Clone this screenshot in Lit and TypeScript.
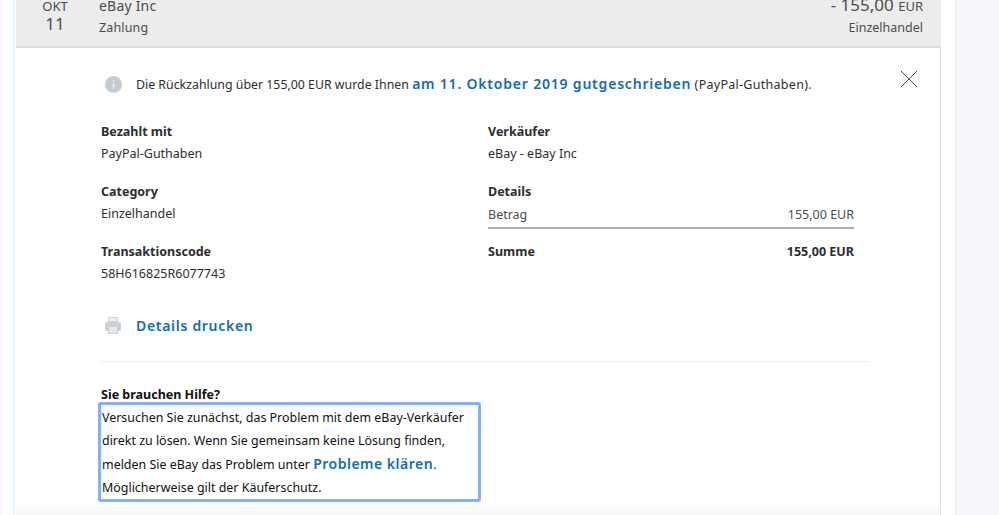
import { LitElement, html, css } from "lit";
import { customElement } from "lit/decorators.js";

@customElement("app-root")
export class AppRoot extends LitElement {
  static styles = css`
    :host {
      display: block;
      width: 999px;
      height: 515px;
      overflow: hidden;
      background: #f5f7fa;
      font-family: "Noto Sans", "Open Sans", sans-serif;
      font-size: 12.5px;
      color: #2c2e2f;
    }
    .page {
      width: 954px;
      height: 515px;
      box-sizing: border-box;
      margin-left: 2px;
      padding: 0 14px 0 10px;
      background: #fff;
      border-right: 1px solid #e9ebee;
      overflow: hidden;
    }
    .inner {
      background: #eff8fd;
      padding-left: 4px;
      height: 515px;
    }
    .head {
      height: 46px;
      background: #ececec;
      border-bottom: 2px solid #d9dfe3;
      display: flex;
      color: #4a4c4e;
    }
    .date {
      width: 78px;
      text-align: center;
      margin-top: -2px;
      line-height: 16px;
      font-size: 13px;
    }
    .date b {
      display: block;
      font-weight: 400;
      font-size: 17px;
      line-height: 18px;
      margin-top: 1px;
    }
    .who {
      margin-left: 5px;
      flex: 1;
    }
    .who .n {
      font-size: 14px;
      line-height: 16px;
      letter-spacing: 0.2px;
      margin-top: -2px;
    }
    .who .s {
      font-size: 12.5px;
      line-height: 16px;
      margin-top: 6px;
      letter-spacing: 0.15px;
    }
    .amt {
      text-align: right;
      padding-right: 18px;
    }
    .amt .v {
      font-size: 17px;
      line-height: 16px;
      margin-top: -3px;
    }
    .amt .v small {
      font-size: 13px;
    }
    .amt .s {
      font-size: 12.5px;
      line-height: 16px;
      margin-top: 6px;
    }
    .card {
      background: #fff;
      border-right: 1px solid #d9dfe3;
      height: 467px;
      box-sizing: border-box;
      padding: 26px 72px 0 85px;
      position: relative;
    }
    .notice {
      display: flex;
      align-items: center;
      gap: 14px;
      margin-left: 4px;
      height: 18px;
      white-space: nowrap;
    }
    .notice svg {
      flex: none;
      margin-top: 3px;
    }
    .notice .lead {
      font-size: 12.35px;
    }
    .notice .tail {
      letter-spacing: 0.28px;
    }
    a {
      color: #0c6dbb;
      font-weight: 600;
      font-size: 14px;
      text-decoration: none;
    }
    .notice a {
      letter-spacing: 0.8px;
    }
    .print a {
      letter-spacing: 0.7px;
    }
    .focus a {
      letter-spacing: 0.5px;
    }
    .close {
      position: absolute;
      right: 22px;
      top: 22px;
    }
    .grid {
      display: grid;
      grid-template-columns: 387px 366px;
      grid-template-rows: 60px 60px 38px;
      margin-top: 32px;
    }
    .l {
      font-weight: 700;
      line-height: 16px;
      color: #2c2e2f;
    }
    .val {
      line-height: 16px;
      margin-top: 6px;
    }
    .row {
      display: flex;
      justify-content: space-between;
      margin-top: 7px;
      padding-bottom: 4px;
      line-height: 16px;
      border-bottom: 2px solid #a9b0b4;
      color: #4a4c4e;
    }
    .sum {
      display: flex;
      justify-content: space-between;
      font-weight: 700;
      line-height: 16px;
    }
    .print {
      display: flex;
      align-items: center;
      gap: 15px;
      margin: 33px 0 0 4px;
      height: 20px;
    }
    hr {
      border: 0;
      border-top: 1px solid #eaeced;
      margin: 26px 0 0;
    }
    .help {
      margin-top: 25px;
    }
    .help .l {
      color: #111;
    }
    .focus {
      width: 383px;
      height: 100px;
      box-sizing: border-box;
      margin: -1px 0 0 -3px;
      border: 3px solid #7fb2fa;
      border-radius: 3px;
      padding: 1px 0 0 1px;
      font-size: 12.45px;
      line-height: 23px;
      color: #111;
      white-space: nowrap;
    }
    .foot {
      position: absolute;
      left: 0;
      right: 0;
      top: 455px;
      height: 12px;
      background: linear-gradient(#fff, #f6f6f6);
    }
  `;

  render() {
    return html`
      <div class="page">
        <div class="inner">
          <div class="head">
            <div class="date">OKT<b>11</b></div>
            <div class="who">
              <div class="n">eBay Inc</div>
              <div class="s">Zahlung</div>
            </div>
            <div class="amt">
              <div class="v">- 155,00 <small>EUR</small></div>
              <div class="s">Einzelhandel</div>
            </div>
          </div>
          <div class="card">
            <div class="notice">
              <svg width="17" height="17" viewBox="0 0 17 17">
                <circle cx="8.5" cy="8.5" r="8.5" fill="#c5ccd1" />
                <rect x="7.6" y="7.2" width="1.8" height="5.6" fill="#e6e9eb" />
                <circle cx="8.5" cy="5" r="1.1" fill="#e6e9eb" />
              </svg>
              <span><span class="lead">Die Rückzahlung über 155,00 EUR wurde Ihnen</span>
                <a href="#">am 11. Oktober 2019 gutgeschrieben</a>
                <span class="tail">(PayPal-Guthaben).</span></span>
            </div>
            <svg class="close" width="18" height="18" viewBox="0 0 18 18" fill="none" stroke="#4a4c4e" stroke-width="1">
              <path d="M1 1L17 17M17 1L1 17" />
            </svg>
            <div class="grid">
              <div>
                <div class="l">Bezahlt mit</div>
                <div class="val">PayPal-Guthaben</div>
              </div>
              <div>
                <div class="l">Verkäufer</div>
                <div class="val">eBay - eBay Inc</div>
              </div>
              <div>
                <div class="l">Category</div>
                <div class="val">Einzelhandel</div>
              </div>
              <div>
                <div class="l">Details</div>
                <div class="row"><span>Betrag</span><span>155,00 EUR</span></div>
              </div>
              <div>
                <div class="l">Transaktionscode</div>
                <div class="val">58H616825R6077743</div>
              </div>
              <div class="sum"><span>Summe</span><span>155,00 EUR</span></div>
            </div>
            <div class="print">
              <svg width="16" height="17" viewBox="0 0 16 17">
                <path d="M3.5 0.5h9v4h-9z" fill="#eef0f2" stroke="#c9d0d5" />
                <rect x="0" y="5" width="16" height="9" rx="2" fill="#c9d0d5" />
                <rect x="3.5" y="9.5" width="9" height="7" fill="#e6e9eb" stroke="#c9d0d5" />
              </svg>
              <a href="#">Details drucken</a>
            </div>
            <hr />
            <div class="help">
              <div class="l">Sie brauchen Hilfe?</div>
              <div class="focus">
                Versuchen Sie zunächst, das Problem mit dem eBay-Verkäufer<br />
                direkt zu lösen. Wenn Sie gemeinsam keine Lösung finden,<br />
                melden Sie eBay das Problem unter <a href="#">Probleme klären</a>.<br />
                Möglicherweise gilt der Käuferschutz.
              </div>
            </div>
            <div class="foot"></div>
          </div>
        </div>
      </div>
    `;
  }
}
